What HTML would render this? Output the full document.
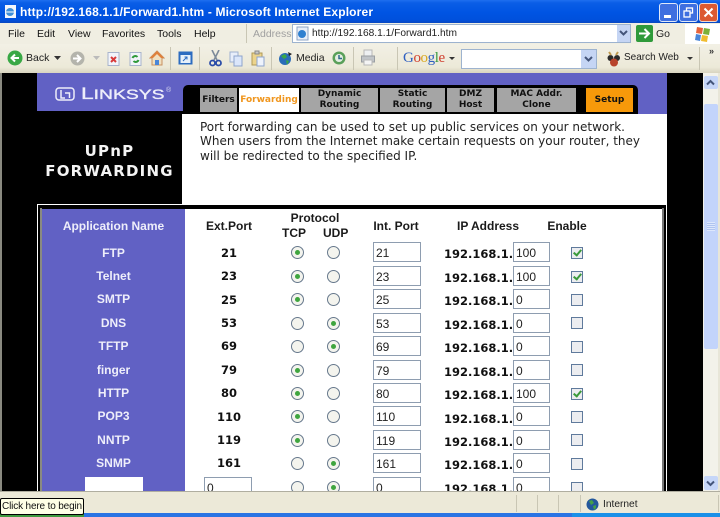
<!DOCTYPE html>
<html><head><meta charset="utf-8"><style>
html,body{margin:0;padding:0;background:#000}
#p{position:relative;width:720px;height:517px;overflow:hidden;background:#ece9d8;font-family:"Liberation Sans",sans-serif;font-size:10.5px;color:#000;filter:blur(.3px)}
#p div,#p span,#p svg{position:absolute}
.t{white-space:nowrap;line-height:14px}
.c{text-align:center}
.m{top:27px;font-size:10.5px;color:#111}
.tab{top:88px;height:24px;background:#a5a5a5;font:bold 9px/11px "DejaVu Sans",sans-serif;text-align:center;color:#111}
.ap{left:42px;width:143px;text-align:center;font:bold 12px/14px "Liberation Sans",sans-serif;color:#eeeefa}
.ex{left:190px;width:78px;text-align:center;font:bold 11.5px/14px "DejaVu Sans",sans-serif;color:#111}
.ip{left:444px;font:bold 11.5px/14px "DejaVu Sans",sans-serif;color:#111;white-space:nowrap}
.i{background:#fff;border:1px solid #8e9db0;box-sizing:border-box;font:12px/20px "Liberation Sans",sans-serif;padding-left:2px;color:#222;height:20px}
.a{left:373px;width:48px}
.b{left:513px;width:37px}
.r{width:13px;height:13px;box-sizing:border-box;border:1px solid #66788c;border-radius:50%;background:#f4f4ee}
.r.on::after{content:"";position:absolute;left:3px;top:3px;width:5px;height:5px;border-radius:50%;background:#3fa53f}
.k{left:571px;width:12px;height:12px;box-sizing:border-box;border:1px solid #5f7a9c;background:#ecedf0}
.k.y::after{content:"";position:absolute;left:3px;top:0;width:3px;height:6px;border:solid #3a9a3a;border-width:0 2px 2px 0;transform:rotate(40deg)}
.h{font:bold 12px/14px "Liberation Sans",sans-serif;color:#1a1a1a;white-space:nowrap}
.sep{width:1px;background:#c9c6b4}
</style></head><body><div id="p">

<!-- title bar -->
<div style="left:0;top:0;width:720px;height:23px;background:linear-gradient(#1f6ff0 0,#0a5de6 3px,#0054e3 12px,#0050dc 20px,#0a48c0 23px)"></div>
<svg style="left:3px;top:4px" width="15" height="15" viewBox="0 0 15 15"><rect x="2" y="1" width="11" height="13" fill="#f4f6fb"/><circle cx="7" cy="8" r="4" fill="#3f8fd8"/><path d="M3 8h8" stroke="#fff"/></svg>
<div class="t" style="left:20px;top:5px;font:bold 12px/14px 'Liberation Sans',sans-serif;color:#fff;letter-spacing:.16px">http://192.168.1.1/Forward1.htm - Microsoft Internet Explorer</div>
<div style="left:659px;top:3px;width:19px;height:19px;box-sizing:border-box;border:1px solid #dfe8fa;border-radius:3px;background:#3f6fe0"></div>
<div style="left:664px;top:15px;width:7px;height:3px;background:#fff"></div>
<div style="left:679px;top:3px;width:19px;height:19px;box-sizing:border-box;border:1px solid #dfe8fa;border-radius:3px;background:#3f6fe0"></div>
<svg style="left:683px;top:7px" width="11" height="11" viewBox="0 0 11 11" fill="none" stroke="#fff" stroke-width="1.3"><rect x="3.5" y="1" width="6" height="5"/><rect x="1" y="4" width="6" height="6" fill="#3f6fe0"/></svg>
<div style="left:699px;top:3px;width:19px;height:19px;box-sizing:border-box;border:1px solid #f0d8d0;border-radius:3px;background:#dc5a32"></div>
<svg style="left:703px;top:7px" width="11" height="11" viewBox="0 0 11 11"><path d="M1.5 1.5l8 8M9.5 1.5l-8 8" stroke="#fff" stroke-width="2"/></svg>

<!-- menu -->
<div style="left:0;top:23px;width:720px;height:21px;background:#f0eee2"></div>
<div class="t m" style="left:8px">File</div>
<div class="t m" style="left:37px">Edit</div>
<div class="t m" style="left:68px">View</div>
<div class="t m" style="left:102px">Favorites</div>
<div class="t m" style="left:157px">Tools</div>
<div class="t m" style="left:194px">Help</div>
<div class="sep" style="left:246px;top:24px;height:19px"></div>
<div class="t" style="left:253px;top:27px;color:#a0a0a0">Address</div>
<div style="left:292px;top:24px;width:339px;height:19px;background:#fff;box-sizing:border-box;border:1px solid #9db3cf"></div>
<svg style="left:295px;top:26px" width="15" height="15" viewBox="0 0 15 15"><rect x="2" y="1" width="11" height="13" fill="#e8eef8" stroke="#8ea4c4"/><circle cx="7" cy="8" r="4" fill="#2f80d0"/></svg>
<div class="t" style="left:312px;top:27px;color:#222;font-size:10.2px">http://192.168.1.1/Forward1.htm</div>
<div style="left:617px;top:25px;width:13px;height:17px;background:#c5d5f4"></div>
<svg style="left:619px;top:30px" width="9" height="7" viewBox="0 0 9 7"><path d="M1 1l3.5 3.5L8 1" fill="none" stroke="#44557a" stroke-width="2"/></svg>
<div style="left:636px;top:25px;width:17px;height:17px;background:#2f9a3a;border-radius:2px"></div>
<svg style="left:638px;top:27px" width="13" height="13" viewBox="0 0 13 13"><path d="M1 6.500h9M6.500 2l4.500 4.500L6.500 11" fill="none" stroke="#fff" stroke-width="2"/></svg>
<div class="t" style="left:656px;top:27px;color:#222">Go</div>
<div style="left:685px;top:24px;width:35px;height:20px;background:#fff"></div>
<svg style="left:693px;top:25px" width="20" height="18" viewBox="0 0 20 18"><path d="M4 2l6 1-1 6-6-1z" fill="#e8643a"/><path d="M11 3l6 1-1 6-6-1z" fill="#7cb03a"/><path d="M3 9l5 1-1 6-5-1z" fill="#4a86d8"/><path d="M9 10l6 1-1 6-6-1z" fill="#f0bc30"/></svg>

<!-- toolbar -->
<div style="left:0;top:44px;width:720px;height:29px;background:linear-gradient(#f2f0e5,#ece9d8 80%,#d8d4c0)"></div>
<svg style="left:7px;top:50px" width="16" height="16" viewBox="0 0 16 16"><circle cx="8" cy="8" r="7.500" fill="#39a845"/><path d="M12 8H5M8 4.500L4.500 8 8 11.500" fill="none" stroke="#fff" stroke-width="2"/></svg>
<div class="t" style="left:26px;top:51px;color:#222">Back</div>
<svg style="left:54px;top:56px" width="7" height="4"><path d="M0 0h7L3.500 4z" fill="#333"/></svg>
<svg style="left:70px;top:51px" width="15" height="15" viewBox="0 0 15 15"><circle cx="7.500" cy="7.500" r="7" fill="#b4b4ac"/><path d="M3 7.500h7M7 4l3.500 3.500L7 11" fill="none" stroke="#fff" stroke-width="2"/></svg>
<svg style="left:93px;top:56px" width="7" height="4"><path d="M0 0h7L3.500 4z" fill="#bbb"/></svg>
<svg style="left:107px;top:52px" width="13" height="14" viewBox="0 0 13 14"><rect x="1" y="0.500" width="11" height="13" fill="#f2f4fa" stroke="#a8b4cc"/><path d="M4 5l5 5M9 5l-5 5" stroke="#d83a3a" stroke-width="2"/></svg>
<svg style="left:129px;top:52px" width="13" height="14" viewBox="0 0 13 14"><rect x="1" y="0.500" width="11" height="13" fill="#f2f4fa" stroke="#a8b4cc"/><path d="M3.500 6a3 3 0 0 1 5-1M9.500 8a3 3 0 0 1-5 1" fill="none" stroke="#2f9a3a" stroke-width="2"/></svg>
<svg style="left:149px;top:50px" width="16" height="16" viewBox="0 0 16 16"><path d="M8 1L1 8h2v7h10V8h2z" fill="#f0e0c0" stroke="#c89060"/><path d="M8 1L1 8h3l4-4 4 4h3z" fill="#e0803a"/><rect x="6" y="10" width="4" height="5" fill="#4a86d8"/></svg>
<div class="sep" style="left:170px;top:47px;height:23px"></div>
<svg style="left:178px;top:51px" width="15" height="14" viewBox="0 0 15 14"><rect x="0.500" y="0.500" width="14" height="13" fill="#2c6cc0"/><rect x="2.500" y="4" width="10" height="8" fill="#e6f0fa"/><path d="M5 10l4-4M6.500 6H9v2.500" stroke="#2c6cc0" fill="none"/></svg>
<div class="sep" style="left:199px;top:47px;height:23px"></div>
<svg style="left:209px;top:50px" width="13" height="17" viewBox="0 0 13 17"><path d="M3 0l5 10M10 0L5 10" stroke="#7c8a9a" stroke-width="1.600"/><circle cx="3.500" cy="13" r="2.500" fill="none" stroke="#2a4ca8" stroke-width="1.800"/><circle cx="9.500" cy="13" r="2.500" fill="none" stroke="#2a4ca8" stroke-width="1.800"/></svg>
<svg style="left:229px;top:51px" width="14" height="16" viewBox="0 0 14 16"><rect x="1" y="1" width="8" height="10" fill="#e8eefa" stroke="#9eb0d0"/><rect x="5" y="5" width="8" height="10" fill="#dbe6fa" stroke="#8ea4cc"/></svg>
<svg style="left:251px;top:50px" width="14" height="17" viewBox="0 0 14 17"><rect x="1" y="3" width="10" height="12" fill="#ecd48c" stroke="#b09a58"/><rect x="4" y="1" width="4" height="3" fill="#c8c8c8" stroke="#888"/><rect x="6" y="7" width="7" height="9" fill="#eef3fc" stroke="#8ea4cc"/></svg>
<div class="sep" style="left:271px;top:47px;height:23px"></div>
<svg style="left:278px;top:51px" width="15" height="15" viewBox="0 0 15 15"><circle cx="7" cy="8" r="6" fill="#2a6cb8"/><path d="M3 5l4-2 2 3-3 2zM8 9l3 1-2 4z" fill="#39a845"/><path d="M10 1l4 2-3 2z" fill="#222"/></svg>
<div class="t" style="left:296px;top:51px;color:#222">Media</div>
<svg style="left:332px;top:51px" width="14" height="14" viewBox="0 0 14 14"><circle cx="7" cy="7" r="6.500" fill="#5aa05a"/><circle cx="7" cy="7" r="4" fill="#e4eee4"/><path d="M7 4v3.500h3" stroke="#2f6a8a" stroke-width="1.500" fill="none"/></svg>
<div class="sep" style="left:353px;top:47px;height:23px"></div>
<svg style="left:361px;top:49px" width="14" height="17" viewBox="0 0 14 17"><rect x="3" y="1" width="8" height="7" fill="#eef0f2" stroke="#b8b8b8"/><rect x="0.500" y="7" width="13" height="6" fill="#c0c4c8" stroke="#9a9ea2"/><rect x="3" y="11" width="8" height="5" fill="#f4f4f4" stroke="#b8b8b8"/></svg>
<div class="sep" style="left:397px;top:47px;height:23px"></div>
<div class="t" style="left:403px;top:49px;font:15px/18px 'Liberation Serif',serif;letter-spacing:-.4px"><b style="font-weight:400;color:#3060c0">G</b><b style="font-weight:400;color:#d04030">o</b><b style="font-weight:400;color:#d8a820">o</b><b style="font-weight:400;color:#3060c0">g</b><b style="font-weight:400;color:#3a9a40">l</b><b style="font-weight:400;color:#d04030">e</b></div>
<svg style="left:449px;top:57px" width="6" height="3"><path d="M0 0h6L3 3z" fill="#333"/></svg>
<div style="left:461px;top:49px;width:136px;height:20px;background:#fff;box-sizing:border-box;border:1px solid #9db3cf"></div>
<div style="left:581px;top:50px;width:15px;height:18px;background:#c5d5f4"></div>
<svg style="left:584px;top:56px" width="9" height="7" viewBox="0 0 9 7"><path d="M1 1l3.500 3.500L8 1" fill="none" stroke="#44557a" stroke-width="2"/></svg>
<svg style="left:606px;top:51px" width="16" height="16" viewBox="0 0 16 16"><circle cx="4.500" cy="7" r="3" fill="#2a2a2a"/><circle cx="11" cy="7" r="3" fill="#2a2a2a"/><circle cx="8" cy="11.500" r="4" fill="#b8442c"/><path d="M3 1l2 3M12 1l-2 3" stroke="#c09a50" stroke-width="2"/></svg>
<div class="t" style="left:624px;top:51px;color:#222;font-size:10px">Search Web</div>
<svg style="left:687px;top:57px" width="6" height="3"><path d="M0 0h6L3 3z" fill="#333"/></svg>
<div class="sep" style="left:699px;top:47px;height:23px"></div>
<div class="t" style="left:709px;top:45px;font:bold 9px/12px 'Liberation Sans',sans-serif;color:#333">»</div>

<!-- page area -->
<div style="left:0;top:73px;width:703px;height:418px;background:#000"></div>
<div style="left:0;top:73px;width:2px;height:418px;background:#8a8a80"></div>
<div style="left:37px;top:73px;width:630px;height:41px;background:#6161c4"></div>
<div style="left:37px;top:111px;width:146px;height:3px;background:#000"></div>
<div style="left:183px;top:85px;width:455px;height:29px;background:#000;border-radius:5px 5px 0 0"></div>
<svg style="left:55px;top:87px" width="20" height="14" viewBox="0 0 20 14" fill="none" stroke="#eeeefa" stroke-width="1.500"><rect x="1" y="1" width="18" height="12" rx="3"/><path d="M6 3v8h4M10 6h4.500v5"/></svg>
<div class="t" style="left:81px;top:86px;font:14px/16px 'Liberation Sans',sans-serif;color:#eeeefa;-webkit-text-stroke:.35px #eeeefa;transform:scaleX(1.38);transform-origin:0 0"><span style="position:static;font-size:16.500px">L</span>INKSYS</div>
<div class="t" style="left:166px;top:86px;font-size:7px;line-height:9px;color:#d8d8f0">®</div>

<div class="tab" style="left:200px;width:37px;line-height:24px">Filters</div>
<div class="tab" style="left:239px;width:60px;line-height:24px;background:#fff;color:#f0961e">Forwarding</div>
<div class="tab" style="left:301px;width:77px;padding-top:1px;height:23px">Dynamic<br>Routing</div>
<div class="tab" style="left:380px;width:65px;padding-top:1px;height:23px">Static<br>Routing</div>
<div class="tab" style="left:447px;width:47px;padding-top:1px;height:23px">DMZ<br>Host</div>
<div class="tab" style="left:497px;width:79px;padding-top:1px;height:23px">MAC Addr.<br>Clone</div>
<div class="tab" style="left:586px;width:47px;line-height:24px;background:#f7990a">Setup</div>

<div style="left:182px;top:114px;width:485px;height:90px;background:#fff"></div>
<div class="t" style="left:200px;top:120px;font:12px/14.300px 'DejaVu Sans',sans-serif;color:#222">Port forwarding can be used to set up public services on your network.<br>When users from the Internet make certain requests on your router, they<br>will be redirected to the specified IP.</div>
<div class="c" style="left:37px;top:141px;width:145px;font:bold 15px/20px 'DejaVu Sans',sans-serif;color:#f4f4f4;letter-spacing:1.200px">UPnP<br>FORWARDING</div>

<!-- table box -->
<div style="left:37px;top:204px;width:630px;height:287px;background:#fff"></div>
<div style="left:38px;top:205px;width:628px;height:286px;background:#000"></div>
<div style="left:40px;top:208px;width:2px;height:283px;background:#8a8a80"></div>
<div style="left:42px;top:209px;width:620px;height:282px;background:#fff"></div>
<div style="left:42px;top:209px;width:143px;height:282px;background:#6161c4"></div>
<div style="left:662px;top:208px;width:2px;height:283px;background:#777"></div>

<div class="ap" style="top:219px">Application Name</div>
<div class="h c" style="left:190px;width:78px;top:219px">Ext.Port</div>
<div class="h c" style="left:270px;width:90px;top:211px">Protocol</div>
<div class="h" style="left:282px;top:226px">TCP</div>
<div class="h" style="left:323px;top:226px">UDP</div>
<div class="h c" style="left:360px;width:72px;top:219px">Int. Port</div>
<div class="h c" style="left:453px;width:70px;top:219px">IP Address</div>
<div class="h c" style="left:537px;width:60px;top:219px">Enable</div>

<div class="ap" style="top:246px">FTP</div><div class="ex" style="top:246px">21</div><div class="r on" style="left:291px;top:246px"></div><div class="r" style="left:327px;top:246px"></div><div class="i a" style="top:242px">21</div><div class="ip" style="top:247px">192.168.1.</div><div class="i b" style="top:242px">100</div><div class="k y" style="top:247px"></div>
<div class="ap" style="top:269px">Telnet</div><div class="ex" style="top:269px">23</div><div class="r on" style="left:291px;top:270px"></div><div class="r" style="left:327px;top:270px"></div><div class="i a" style="top:266px">23</div><div class="ip" style="top:271px">192.168.1.</div><div class="i b" style="top:266px">100</div><div class="k y" style="top:271px"></div>
<div class="ap" style="top:292px">SMTP</div><div class="ex" style="top:293px">25</div><div class="r on" style="left:291px;top:293px"></div><div class="r" style="left:327px;top:293px"></div><div class="i a" style="top:289px">25</div><div class="ip" style="top:294px">192.168.1.</div><div class="i b" style="top:289px">0</div><div class="k" style="top:294px"></div>
<div class="ap" style="top:316px">DNS</div><div class="ex" style="top:316px">53</div><div class="r" style="left:291px;top:317px"></div><div class="r on" style="left:327px;top:317px"></div><div class="i a" style="top:313px">53</div><div class="ip" style="top:318px">192.168.1.</div><div class="i b" style="top:313px">0</div><div class="k" style="top:317px"></div>
<div class="ap" style="top:339px">TFTP</div><div class="ex" style="top:339px">69</div><div class="r" style="left:291px;top:340px"></div><div class="r on" style="left:327px;top:340px"></div><div class="i a" style="top:336px">69</div><div class="ip" style="top:341px">192.168.1.</div><div class="i b" style="top:336px">0</div><div class="k" style="top:341px"></div>
<div class="ap" style="top:363px">finger</div><div class="ex" style="top:363px">79</div><div class="r on" style="left:291px;top:364px"></div><div class="r" style="left:327px;top:364px"></div><div class="i a" style="top:360px">79</div><div class="ip" style="top:365px">192.168.1.</div><div class="i b" style="top:360px">0</div><div class="k" style="top:364px"></div>
<div class="ap" style="top:386px">HTTP</div><div class="ex" style="top:386px">80</div><div class="r on" style="left:291px;top:387px"></div><div class="r" style="left:327px;top:387px"></div><div class="i a" style="top:383px">80</div><div class="ip" style="top:388px">192.168.1.</div><div class="i b" style="top:383px">100</div><div class="k y" style="top:388px"></div>
<div class="ap" style="top:409px">POP3</div><div class="ex" style="top:410px">110</div><div class="r on" style="left:291px;top:410px"></div><div class="r" style="left:327px;top:410px"></div><div class="i a" style="top:406px">110</div><div class="ip" style="top:412px">192.168.1.</div><div class="i b" style="top:406px">0</div><div class="k" style="top:411px"></div>
<div class="ap" style="top:433px">NNTP</div><div class="ex" style="top:433px">119</div><div class="r on" style="left:291px;top:434px"></div><div class="r" style="left:327px;top:434px"></div><div class="i a" style="top:430px">119</div><div class="ip" style="top:435px">192.168.1.</div><div class="i b" style="top:430px">0</div><div class="k" style="top:434px"></div>
<div class="ap" style="top:456px">SNMP</div><div class="ex" style="top:456px">161</div><div class="r" style="left:291px;top:457px"></div><div class="r on" style="left:327px;top:457px"></div><div class="i a" style="top:453px">161</div><div class="ip" style="top:458px">192.168.1.</div><div class="i b" style="top:453px">0</div><div class="k" style="top:458px"></div>
<div style="left:85px;top:477px;width:58px;height:14px;background:#fff"></div>
<div class="i" style="left:204px;top:477px;width:48px">0</div><div class="r" style="left:291px;top:481px"></div><div class="r on" style="left:327px;top:481px"></div><div class="i a" style="top:477px">0</div><div class="ip" style="top:482px">192.168.1.</div><div class="i b" style="top:477px">0</div><div class="k" style="top:482px"></div>

<!-- scrollbar -->
<div style="left:703px;top:73px;width:15px;height:418px;background:#f3f2ea"></div>
<div style="left:718px;top:73px;width:2px;height:418px;background:#e8e6d8"></div>
<div style="left:704px;top:76px;width:14px;height:13px;background:#c6d6f8;border-radius:2px"></div>
<svg style="left:706px;top:79px" width="9" height="7" viewBox="0 0 9 7"><path d="M1 5.500L4.500 2 8 5.500" fill="none" stroke="#44557a" stroke-width="2"/></svg>
<div style="left:704px;top:104px;width:14px;height:245px;background:#c3d4fb;border-radius:2px"></div>
<div style="left:707px;top:222px;width:8px;height:9px;background:repeating-linear-gradient(#dde7fc 0 1px,#b0c4f0 1px 2px)"></div>
<div style="left:704px;top:476px;width:14px;height:14px;background:#c6d6f8;border-radius:2px"></div>
<svg style="left:706px;top:480px" width="9" height="7" viewBox="0 0 9 7"><path d="M1 1.500L4.500 5 8 1.500" fill="none" stroke="#44557a" stroke-width="2"/></svg>

<!-- status -->
<div style="left:0;top:491px;width:720px;height:22px;background:#ece9d8;border-top:1px solid #b0aea0;box-sizing:border-box"></div>
<div class="sep" style="left:516px;top:495px;height:17px"></div>
<div class="sep" style="left:537px;top:495px;height:17px"></div>
<div class="sep" style="left:558px;top:495px;height:17px"></div>
<div class="sep" style="left:580px;top:495px;height:17px"></div>
<div class="sep" style="left:718px;top:495px;height:17px"></div>
<svg style="left:586px;top:498px" width="13" height="13" viewBox="0 0 13 13"><circle cx="6.500" cy="6.500" r="6" fill="#24589c"/><path d="M3 3l3-1 2 3-3 2zM7 8l3-1 0 3-2 2z" fill="#44a04a"/></svg>
<div class="t" style="left:603px;top:498px;color:#222;font-size:10.200px">Internet</div>
<div style="left:0;top:513px;width:720px;height:4px;background:#2a74e4"></div>
<div style="left:0;top:513px;width:84px;height:4px;background:#3f9a3f"></div>
<div style="left:572px;top:513px;width:148px;height:4px;background:#1a90e8"></div>
<div class="t" style="left:0;top:498px;width:84px;height:17px;box-sizing:border-box;background:#ffffe6;border:1px solid #000;border-radius:2px;padding-left:1px;font-size:10px;letter-spacing:-.15px;line-height:15px;color:#111">Click here to begin</div>
</div></body></html>
